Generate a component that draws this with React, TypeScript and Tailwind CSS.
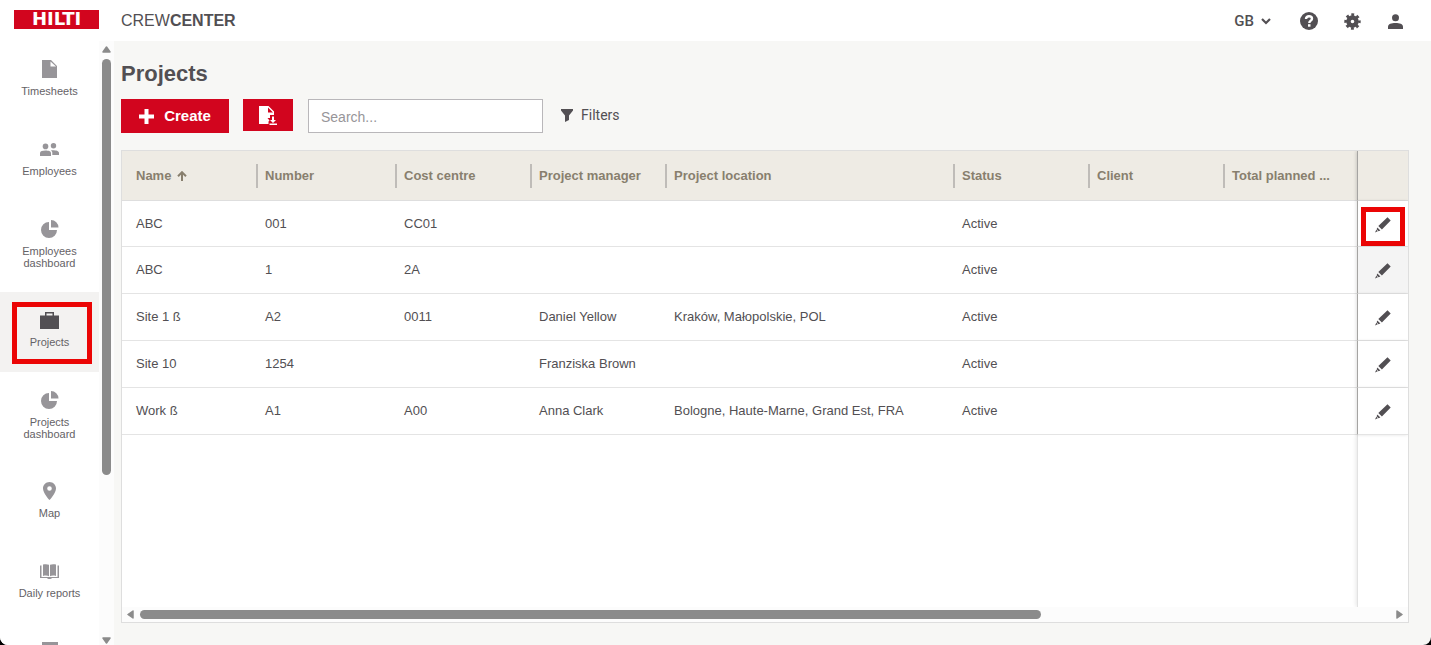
import type { ReactNode } from 'react';

const FileIcon = () => (
  <svg width="15" height="18" viewBox="0 0 15 18" fill="currentColor" aria-hidden="true">
    <path fillRule="evenodd" d="M0 0h9l6 6v12H0zM8.5 1.5v5H14z" />
  </svg>
);

const PeopleIcon = () => (
  <svg width="19" height="13" viewBox="0 0 19 13" fill="currentColor" aria-hidden="true">
    <circle cx="5.500" cy="3.400" r="2.800" />
    <circle cx="13.500" cy="2.800" r="2.700" />
    <path d="M0 13v-3c0-1.800 2.500-2.500 5.500-2.500S11 8.200 11 10v3zM12.300 12V9.800c0-1-.6-1.800-1.500-2.500 3-.4 8.200 0 8.200 2.500V12z" />
  </svg>
);

const PieIcon = () => (
  <svg width="19" height="19" viewBox="0 0 19 19" fill="currentColor" aria-hidden="true">
    <path d="M9 2v8h8a8 8 0 1 1-8-8zM11 0a7.500 7.500 0 0 1 7.500 7.500H11z" />
  </svg>
);

const BriefcaseIcon = () => (
  <svg width="19" height="17" viewBox="0 0 19 17" fill="currentColor" aria-hidden="true">
    <path fillRule="evenodd" d="M5 3.500V0h9v3.500h5V17H0V3.500zM6.500 1.500v2h6v-2z" />
  </svg>
);

const PinIcon = () => (
  <svg width="13" height="18" viewBox="0 0 13 18" fill="currentColor" aria-hidden="true">
    <path fillRule="evenodd" d="M6.500 0C2.900 0 0 2.900 0 6.400 0 11 6.500 18 6.500 18S13 11 13 6.400C13 2.900 10.100 0 6.500 0zm0 4.200a2.300 2.300 0 1 1 0 4.600 2.300 2.300 0 0 1 0-4.600z" />
  </svg>
);

const BookIcon = () => (
  <svg width="19" height="15" viewBox="0 0 19 15" fill="currentColor" aria-hidden="true">
    <path d="M3 .5C5 0 7.500 0 9 .8v11.400c-1.500-.8-4-.8-6-.2zM10 .8C11.500 0 14 0 16 .5V12c-2-.6-4.500-.6-6 .2z" />
    <path d="M0 1.500h1.500v11.500h16V1.500H19V14h-7c-.5.700-1.300 1-2.500 1S7.500 14.700 7 14H0z" />
  </svg>
);

const ListIcon = () => (
  <svg width="16" height="18" viewBox="0 0 16 18" fill="currentColor" aria-hidden="true">
    <path d="M0 0h16v18H0z" />
  </svg>
);

const HelpIcon = () => (
  <svg width="18" height="18" viewBox="0 0 18 18" aria-hidden="true">
    <circle cx="9" cy="9" r="9" fill="currentColor" />
    <path d="M6 6.900C6 5.100 7.200 4.200 9 4.200s3 .9 3 2.500c0 1.900-2.700 2-2.700 4.300" fill="none" stroke="#fff" strokeWidth="2.400" />
    <path d="M8 12.200h2.500v2.500H8z" fill="#fff" />
  </svg>
);

const GearIcon = () => (
  <svg width="17" height="17" viewBox="0 0 17 17" aria-hidden="true">
    <circle cx="8.500" cy="8.500" r="4" fill="none" stroke="currentColor" strokeWidth="4.400" />
    <circle cx="8.500" cy="8.500" r="6.800" fill="none" stroke="currentColor" strokeWidth="2.800" strokeDasharray="2.800 2.541" strokeDashoffset="1.400" />
  </svg>
);

const UserIcon = () => (
  <svg width="15" height="15" viewBox="0 0 15 15" fill="currentColor" aria-hidden="true">
    <circle cx="7.500" cy="3.700" r="3.500" />
    <path d="M0 15v-2.500C0 10 3.500 9 7.500 9S15 10 15 12.500V15z" />
  </svg>
);

const PencilIcon = () => (
  <svg width="16" height="16" viewBox="0 0 16 16" fill="currentColor" aria-hidden="true">
    <path d="M12.500.3 15.700 3.500 6.900 12.500 3.300 8.900zM2.400 10.400l3 3-1.900.8-1.900-1.900zM1.300 12.800l1.500 1.500L0 15.600z" />
  </svg>
);

const ExportIcon = () => (
  <svg width="18" height="19" viewBox="0 0 18 19" fill="currentColor" aria-hidden="true">
    <path fillRule="evenodd" d="M0 0h9.500L15 5.500V9h-4v3H8.500l2 2.500-1 1V18H0zM9 1.500v5h5z" />
    <path d="M13 10.500h2V14h2l-3 3-3-3h2zM10.500 17.500H18V19h-7.500z" />
  </svg>
);

const navItems = [
  { label: 'Timesheets', icon: <FileIcon /> },
  { label: 'Employees', icon: <PeopleIcon /> },
  { label: 'Employees dashboard', icon: <PieIcon /> },
  { label: 'Projects', icon: <BriefcaseIcon />, active: true },
  { label: 'Projects dashboard', icon: <PieIcon /> },
  { label: 'Map', icon: <PinIcon /> },
  { label: 'Daily reports', icon: <BookIcon /> },
  { label: '', icon: <ListIcon /> },
];

const columns = [
  { label: 'Name', width: 'w-[134px]' },
  { label: 'Number', width: 'w-[139px]' },
  { label: 'Cost centre', width: 'w-[135px]' },
  { label: 'Project manager', width: 'w-[135px]' },
  { label: 'Project location', width: 'w-[288px]' },
  { label: 'Status', width: 'w-[135px]' },
  { label: 'Client', width: 'w-[135px]' },
  { label: 'Total planned ...', width: 'w-[134px]' },
];

const projects = [
  ['ABC', '001', 'CC01', '', '', 'Active', '', ''],
  ['ABC', '1', '2A', '', '', 'Active', '', ''],
  ['Site 1 ß', 'A2', '0011', 'Daniel Yellow', 'Kraków, Małopolskie, POL', 'Active', '', ''],
  ['Site 10', '1254', '', 'Franziska Brown', '', 'Active', '', ''],
  ['Work ß', 'A1', 'A00', 'Anna Clark', 'Bologne, Haute-Marne, Grand Est, FRA', 'Active', '', ''],
];

function Arrow({ className = '' }: { className?: string }) {
  return (
    <svg width="9" height="7" viewBox="0 0 9 7" className={`shrink-0 text-[#8b8b8b] ${className}`} aria-hidden="true">
      <path d="M4.500 1 8 6H1z" fill="currentColor" stroke="currentColor" strokeWidth="1.500" strokeLinejoin="round" />
    </svg>
  );
}

function HeaderButton({ label, children }: { label: string; children: ReactNode }) {
  return (
    <button aria-label={label} className="flex w-[18px] items-center justify-center">
      {children}
    </button>
  );
}

function Header() {
  return (
    <header className="flex h-[41px] shrink-0 items-center bg-white pt-px pr-[27px] pl-[14px]">
      <div className="mb-1 flex h-[19px] w-[85px] items-center justify-center bg-[#d2051e] font-['DejaVu_Sans'] text-lg leading-5 font-bold text-white">
        HILTI
      </div>
      <div className="ml-[22px] text-base">
        CREW<b>CENTER</b>
      </div>
      <div className="ml-auto flex items-center gap-[25px]">
        <button className="mr-1 flex items-center gap-[7px] font-[Roboto] text-[15px] font-medium">
          GB
          <svg width="10" height="7" viewBox="0 0 10 7" aria-hidden="true">
            <path d="m1 1 4 4 4-4" fill="none" stroke="currentColor" strokeWidth="2.200" />
          </svg>
        </button>
        <HeaderButton label="Help"><HelpIcon /></HeaderButton>
        <HeaderButton label="Settings"><GearIcon /></HeaderButton>
        <HeaderButton label="Account"><UserIcon /></HeaderButton>
      </div>
    </header>
  );
}

function Sidebar() {
  return (
    <aside className="flex shrink-0 overflow-hidden bg-white">
      <nav className="w-[99px]">
        {navItems.map(item => (
          <a
            key={item.label}
            href="#"
            aria-label={item.label || 'More'}
            className={`relative flex min-h-20 flex-col items-center px-4 pt-[19px] pb-[23px] text-center text-[11px] leading-3 ${
              item.active ? 'bg-[#f3f2f1]' : ''
            }`}
          >
            <span className={`flex h-[18px] items-center ${item.active ? 'text-[#524f53]' : 'text-[#979599]'}`}>
              {item.icon}
            </span>
            <span className="mt-[7px] text-[#656266]">{item.label}</span>
            {item.active && <span className="absolute top-2.5 right-[7px] bottom-2 left-3 border-5 border-[#eb0505]" />}
          </a>
        ))}
      </nav>
      <div className="flex w-[15px] flex-col items-center bg-[#fcfcfc] pt-[5px] pb-px">
        <Arrow />
        <div className="mt-1.5 mb-2 w-full flex-1">
          <div className="mx-auto h-[73%] w-[9px] rounded-full bg-[#8b8b8b]" />
        </div>
        <Arrow className="rotate-180" />
      </div>
    </aside>
  );
}

function Toolbar() {
  return (
    <div className="mb-[17px] flex items-start">
      <button className="flex h-[34px] w-[108px] items-center justify-center gap-2.5 bg-[#d2051e] text-[15px] font-bold text-white">
        <svg width="15" height="15" viewBox="0 0 15 15" aria-hidden="true">
          <path d="M7.500 0v15M0 7.500h15" stroke="currentColor" strokeWidth="4" />
        </svg>
        Create
      </button>
      <button aria-label="Export" className="ml-[14px] flex h-8 w-[50px] items-center justify-center bg-[#d2051e] text-white">
        <ExportIcon />
      </button>
      <input
        type="text"
        aria-label="Search"
        placeholder="Search..."
        className="ml-[15px] h-[34px] w-[235px] border border-[#b9b7ba] bg-white px-3 pt-0.5 text-sm placeholder:text-[#979599]"
      />
      <button className="ml-[18px] flex h-8 items-center gap-2 font-[Roboto] text-sm">
        <svg width="12" height="13" viewBox="0 0 12 13" aria-hidden="true">
          <path d="M0 0h12v1.500L8 6.500V11l-4 2V6.500L0 1.500z" fill="currentColor" />
        </svg>
        Filters
      </button>
    </div>
  );
}

function ProjectsTable() {
  return (
    <table className="w-full table-fixed border-separate border-spacing-0 text-left text-[13px]">
      <thead>
        <tr className="h-[50px] bg-[#eeebe4] text-[#887f6e]">
          {columns.map((col, i) => (
            <th key={col.label} className={`border-b border-[#dedede] p-0 ${col.width}`}>
              <div className={`flex h-6 items-center gap-1.5 whitespace-nowrap ${i === 0 ? 'pl-[14px]' : 'border-l-2 border-[#bfbcb8] pl-[7px]'}`}>
                {col.label}
                {i === 0 && (
                  <svg width="10" height="10" viewBox="0 0 10 10" aria-hidden="true">
                    <path d="M5 10V1.500M1 5.200l4-4 4 4" fill="none" stroke="currentColor" strokeWidth="2" />
                  </svg>
                )}
              </div>
            </th>
          ))}
          <th aria-label="Actions" className="w-[51px] border-b border-l border-b-[#dedede] border-l-[#a5a4a2] shadow-[-1px_0_3px_rgba(0,0,0,0.15)]" />
        </tr>
      </thead>
      <tbody>
        {projects.map((row, r) => (
          <tr key={r} className="h-[47px] first:h-[46px]">
            {row.map((cell, i) => (
              <td key={i} className={`border-b border-[#e4e4e4] py-0 pr-0 whitespace-nowrap ${i === 0 ? 'pl-[14px]' : 'pl-[9px]'}`}>
                {cell}
              </td>
            ))}
            <td
              className={`relative border-b border-l border-b-[#e4e4e4] border-l-[#a5a4a2] p-0 shadow-[-1px_0_3px_rgba(0,0,0,0.12)] ${
                r === 1 ? 'bg-[#f4f4f4]' : 'bg-white'
              }`}
            >
              <button aria-label="Edit project" className="mx-auto mt-0.5 flex size-6 items-center justify-center">
                <PencilIcon />
              </button>
              {r === 0 && <span className="absolute inset-x-[3px] top-1.5 bottom-0 border-5 border-[#eb0505]" />}
            </td>
          </tr>
        ))}
      </tbody>
    </table>
  );
}

export default function App() {
  return (
    <div className="h-screen bg-black">
      <div className="flex h-full flex-col overflow-hidden rounded-b-lg bg-[#f7f7f5] font-['Liberation_Sans',sans-serif] text-[#524f53]">
        <Header />
        <div className="flex min-h-0 flex-1">
          <Sidebar />
          <main className="flex min-w-0 flex-1 flex-col pt-[21px] pr-[22px] pb-[22px] pl-[7px]">
            <h1 className="mb-[13px] text-[22px] leading-6 font-bold">Projects</h1>
            <Toolbar />
            <div className="flex flex-1 flex-col overflow-hidden border border-[#dedede] bg-white">
              <ProjectsTable />
              {/* Pinned column carries on below the last row */}
              <div className="flex flex-1 justify-end">
                <div className="w-[51px] border-l border-[#e2e2e2] shadow-[-1px_0_4px_rgba(0,0,0,0.1)]" />
              </div>
              <div className="relative flex h-[15px] items-center bg-[#fcfcfc] px-1">
                <Arrow className="-rotate-90" />
                <div className="mr-1 ml-[5px] flex-1">
                  <div className="h-[9px] w-[72%] rounded-full bg-[#8b8b8b]" />
                </div>
                <Arrow className="rotate-90" />
              </div>
            </div>
          </main>
        </div>
      </div>
    </div>
  );
}
